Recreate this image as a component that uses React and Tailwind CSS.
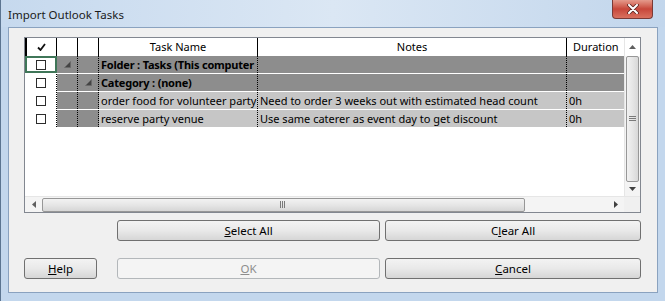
import React from 'react';

const font = { fontFamily: '"Noto Sans", "Open Sans", sans-serif' };

const Tri = () => (
    <svg width="7" height="7" viewBox="0 0 7 7">
        <polygon points="6.5,0.5 6.5,6.5 0.5,6.5" fill="#444444" stroke="#6a6a6a" strokeWidth="0.6" />
    </svg>
);

const Box = () => <div className="w-[10px] h-[10px] border border-[#2c2c2c] bg-white" />;

const rows = [
    { kind: 'folder', name: 'Folder : Tasks (This computer', notes: '', dur: '', tri: 1 },
    { kind: 'folder', name: 'Category : (none)', notes: '', dur: '', tri: 2 },
    { kind: 'task', name: 'order food for volunteer party', notes: 'Need to order 3 weeks out with estimated head count', dur: '0h' },
    { kind: 'task', name: 'reserve party venue', notes: 'Use same caterer as event day to get discount', dur: '0h' },
];

const Btn = ({ children, className = '', disabled }) => (
    <button
        className={`h-[21px] rounded-[3px] border text-[11.5px] flex items-center justify-center ${
            disabled
                ? 'border-[#b3b7ba] bg-[#f4f4f4] text-[#8d8d8d]'
                : 'border-[#707070] bg-gradient-to-b from-[#f3f3f3] via-[#e9e9e9] to-[#d6d6d6] text-black'
        } ${className}`}>
        {children}
    </button>
);

const App = () => {
    return (
        <div className="w-[665px] h-[301px] overflow-hidden bg-[#c3d7ed] border-l border-[#5c7591] flex flex-col" style={font}>
            {/* title bar */}
            <div className="h-[27px] flex items-start justify-between bg-gradient-to-r from-[#c6d9ee] via-[#dbe7f4] to-[#c2d6ec]">
                <span className="pl-[7px] pt-[6px] text-[11.5px] text-[#1a1a1a]">Import Outlook Tasks</span>
                <div className="mr-[12px] w-[41px] h-[19px] rounded-b-[4px] border border-t-0 border-[#7a3a36] bg-gradient-to-b from-[#e49a8c] via-[#c7463a] to-[#d9705f] flex items-center justify-center">
                    <svg width="12" height="10" viewBox="0 0 12 10">
                        <path d="M2 1 L10 9 M10 1 L2 9" stroke="#5b2420" strokeWidth="3.6" strokeLinecap="round" />
                        <path d="M2 1 L10 9 M10 1 L2 9" stroke="#ffffff" strokeWidth="2" strokeLinecap="round" />
                    </svg>
                </div>
            </div>

            {/* client area */}
            <div className="ml-[7px] w-[650px] h-[266px] border border-[#8aa2bf] bg-[#f0f0f0] pt-[9px] pl-[15px]">
                {/* table */}
                <div className="w-[617px] h-[176px] border border-[#828790] bg-white flex flex-col">
                    <div className="flex h-[158px]">
                        <div className="w-[599px] flex flex-col">
                            <div className="grid grid-cols-[32px_21px_21px_159px_309px_57px] h-[18px] text-[11px] bg-white">
                                <div className="border-l-2 border-r border-black flex items-center justify-center">
                                    <svg width="9" height="8" viewBox="0 0 9 8">
                                        <path d="M1 4.5 L3.5 7 L8 1" stroke="#111" strokeWidth="1.8" fill="none" />
                                    </svg>
                                </div>
                                <div className="border-r border-black" />
                                <div className="border-r border-black" />
                                <div className="border-r border-black flex items-center justify-center">Task Name</div>
                                <div className="border-r border-black flex items-center justify-center">Notes</div>
                                <div className="flex items-center pl-[6px]">Duration</div>
                            </div>
                            {rows.map((r, i) => {
                                const folder = r.kind === 'folder';
                                const main = folder ? 'bg-[#8d8d8d] font-bold tracking-[-0.2px]' : 'bg-[#c6c6c6]';
                                return (
                                    <div key={i} className="grid grid-cols-[32px_21px_21px_159px_309px_57px] h-[18px] text-[11px] text-black border-b border-white">
                                        <div
                                            className={`flex items-center justify-center bg-white ${
                                                i === 0 ? 'border-2 border-[#3f7658]' : 'border-r border-dotted border-black'
                                            }`}>
                                            <Box />
                                        </div>
                                        <div className="bg-[#8d8d8d] border-r border-dotted border-black flex items-center justify-center">
                                            {r.tri === 1 && <Tri />}
                                        </div>
                                        <div className="bg-[#8d8d8d] border-r border-dotted border-black flex items-center justify-center">
                                            {r.tri === 2 && <Tri />}
                                        </div>
                                        <div className={`${main} border-r border-dotted border-black pl-[2px] flex items-center overflow-hidden whitespace-nowrap leading-none`}>
                                            {r.name}
                                        </div>
                                        <div className={`${main} border-r border-dotted border-black pl-[2px] flex items-center overflow-hidden whitespace-nowrap leading-none`}>
                                            {r.notes}
                                        </div>
                                        <div className={`${main} pl-[2px] flex items-center overflow-hidden whitespace-nowrap leading-none`}>
                                            {r.dur}
                                        </div>
                                    </div>
                                );
                            })}
                        </div>
                        {/* vertical scrollbar */}
                        <div className="w-[16px] flex flex-col bg-[#f4f4f4] border-l border-[#e6e6e6]">
                            <div className="h-[18px] flex items-center justify-center bg-white">
                                <svg width="7" height="4" viewBox="0 0 7 4"><polygon points="3.5,0 7,4 0,4" fill="#606060" /></svg>
                            </div>
                            <div className="mx-[1px] h-[126px] rounded-[2px] border border-[#979797] bg-gradient-to-r from-[#f2f2f2] via-[#e6e6e6] to-[#d8d8d8] flex items-center justify-center">
                                <svg width="7" height="6" viewBox="0 0 7 6">
                                    <path d="M0 0.5 H7 M0 2.5 H7 M0 4.5 H7" stroke="#7a7a7a" strokeWidth="1" />
                                </svg>
                            </div>
                            <div className="flex-1 flex items-center justify-center">
                                <svg width="7" height="4" viewBox="0 0 7 4"><polygon points="0,0 7,0 3.5,4" fill="#404040" /></svg>
                            </div>
                        </div>
                    </div>
                    {/* horizontal scrollbar */}
                    <div className="flex h-[16px] bg-[#f4f4f4] border-t border-[#e6e6e6]">
                        <div className="w-[599px] flex items-center">
                            <div className="w-[17px] flex items-center justify-center">
                                <svg width="4" height="7" viewBox="0 0 4 7"><polygon points="4,0 4,7 0,3.5" fill="#606060" /></svg>
                            </div>
                            <div className="w-[483px] h-[14px] rounded-[2px] border border-[#979797] bg-gradient-to-b from-[#f2f2f2] via-[#e6e6e6] to-[#d6d6d6] flex items-center justify-center">
                                <svg width="7" height="7" viewBox="0 0 7 7">
                                    <path d="M0.5 0 V7 M2.5 0 V7 M4.5 0 V7" stroke="#7a7a7a" strokeWidth="1" />
                                </svg>
                            </div>
                            <div className="flex-1" />
                            <div className="w-[16px] flex items-center justify-center">
                                <svg width="4" height="7" viewBox="0 0 4 7"><polygon points="0,0 4,3.5 0,7" fill="#404040" /></svg>
                            </div>
                        </div>
                        <div className="w-[16px] bg-[#f0f0f0]" />
                    </div>
                </div>

                {/* buttons */}
                <div className="flex mt-[7px] pl-[93px] gap-[5px]">
                    <Btn className="w-[263px]"><span><u>S</u>elect All</span></Btn>
                    <Btn className="w-[256px]"><span>C<u>l</u>ear All</span></Btn>
                </div>
                <div className="flex mt-[17px] gap-[5px]">
                    <Btn className="w-[73px] mr-[15px]"><span><u>H</u>elp</span></Btn>
                    <Btn className="w-[263px]" disabled><span><u>O</u>K</span></Btn>
                    <Btn className="w-[256px]"><span><u>C</u>ancel</span></Btn>
                </div>
            </div>
            <div className="flex-1" />
        </div>
    );
};

export default App;
